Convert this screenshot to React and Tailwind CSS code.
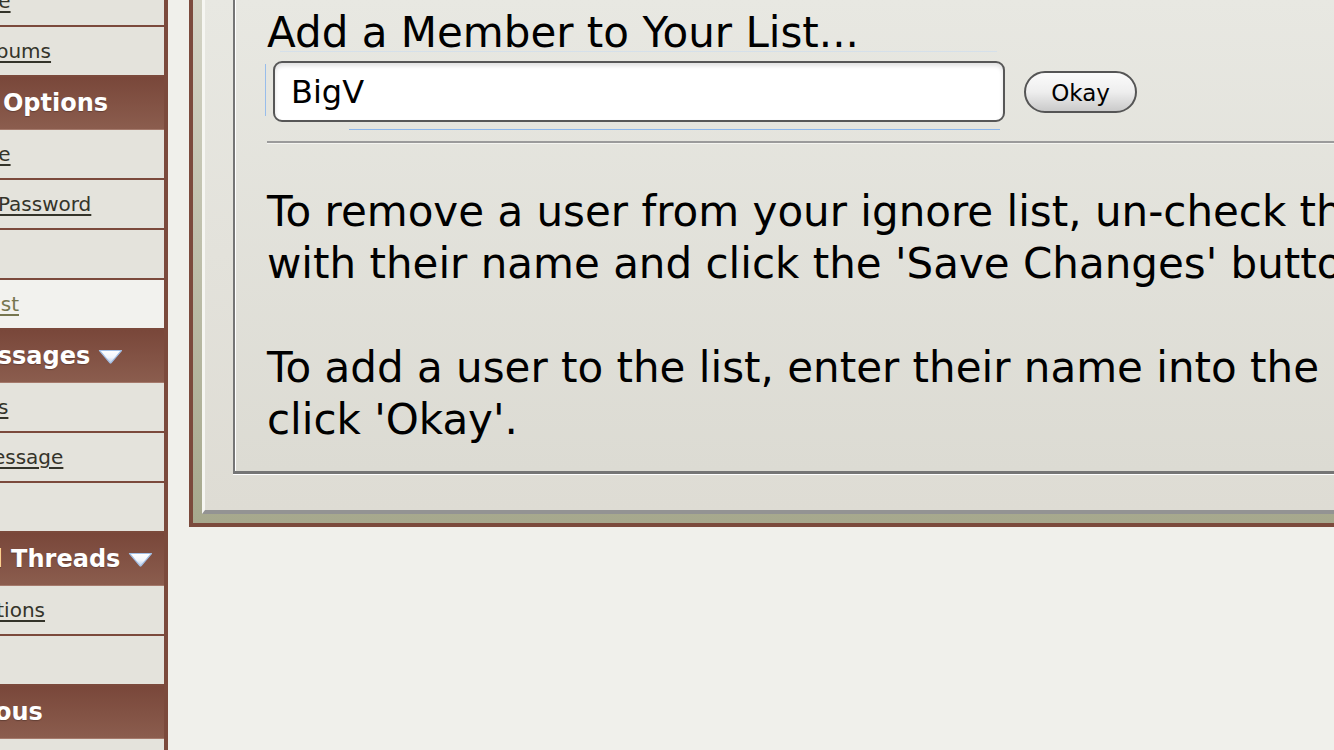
import React from 'react';

const navItems = [
  { type: 'link', label: 'Edit Signature' },
  { type: 'link', label: 'Pictures & Albums' },
  { type: 'header', label: 'Settings & Options' },
  { type: 'link', label: 'Edit Signature' },
  { type: 'link', label: 'Edit Email & Password' },
  { type: 'link', label: 'Edit Options' },
  { type: 'link', label: 'Edit Ignore List', active: true },
  { type: 'header', label: 'Private Messages', arrow: true },
  { type: 'link', label: 'List Messages' },
  { type: 'link', label: 'Send New Message' },
  { type: 'link', label: 'Edit Folders' },
  { type: 'header', label: 'Subscribed Threads', arrow: true },
  { type: 'link', label: 'List Subscriptions' },
  { type: 'link', label: 'Edit Folders' },
  { type: 'header', label: 'Miscellaneous' },
  { type: 'link', label: 'Attachments' },
];

// little blue-white drop-down arrow next to collapsible headers
const DownArrow = () => (
  <svg width="25" height="15" viewBox="0 0 25 15" className="ml-2 shrink-0">
    <defs>
      <linearGradient id="arrowFill" x1="0" y1="0" x2="0" y2="1">
        <stop offset="0" stopColor="#ffffff" />
        <stop offset="0.55" stopColor="#f2f6fc" />
        <stop offset="1" stopColor="#b3cbec" />
      </linearGradient>
    </defs>
    <path d="M1.5 1.5 H23.5 L13 13.8 Q12.5 14.3 12 13.8 Z" fill="url(#arrowFill)" stroke="#a3c0e6" strokeWidth="1.2" strokeLinejoin="round" />
  </svg>
);

const Sidebar = () => (
  <aside className="w-[168px] shrink-0 overflow-hidden border-r-4 border-[#7b4a3c] bg-[#e4e3dc]">
    <div className="-mt-[23px]">
      {navItems.map((item, i) =>
        item.type === 'header' ? (
          <div
            key={i}
            className="flex h-[53px] items-center whitespace-nowrap border-b border-[#a57a6c] bg-gradient-to-b from-[#79473a] to-[#8b5d4e] text-[24px] font-bold text-white [text-shadow:0_1px_1px_rgba(0,0,0,0.25)]"
          >
            <span className="-ml-[148px]">{item.label}</span>
            {item.arrow && <DownArrow />}
          </div>
        ) : (
          <div
            key={i}
            className={`flex h-[50px] items-center whitespace-nowrap border-b-2 border-[#7b4a3c] text-[20px] ${
              item.active ? 'bg-[#f2f2ee] text-[#76764f]' : 'bg-[#e4e3dc] text-[#34342a]'
            }`}
          >
            <span className="-ml-[131px] underline underline-offset-[3px]">{item.label}</span>
          </div>
        )
      )}
    </div>
  </aside>
);

const IgnoreListPanel = () => (
  <div className="border-b-4 border-l-4 border-[#7b4a3c]">
    {/* olive band */}
    <div className="bg-gradient-to-b from-[#d4d4c6] to-[#a6a88d] pb-[9px] pl-[9px]">
      {/* bevelled outer panel */}
      <div className="border-b-4 border-l-[3px] border-b-[#939393] border-l-[#f6f6f2] bg-gradient-to-b from-[#e8e8e2] to-[#dedcd4] pb-[36px] pl-[28px]">
        {/* inner panel */}
        <div className="border-b-[3px] border-l-2 border-[#757575] bg-gradient-to-b from-[#e8e8e2] to-[#dcdbd3] pb-[25px] pl-[32px] pt-[7px] shadow-[inset_1px_0_0_#ffffff,0_1px_0_#ffffff]">
          <div className="w-[1465px] text-[42px] leading-[52px] text-black">
            <div>Add a Member to Your List...</div>

            <div className="relative mt-[2px] flex items-center pl-[6px]">
              <span className="absolute -top-[10px] left-[13px] h-px w-[717px] bg-[#d5e0ea]" />
              <span className="absolute left-[-2px] top-[3px] h-[52px] w-px bg-[#98bdeb]" />
              <span className="absolute -bottom-[8px] left-[82px] h-px w-[651px] bg-[#8cb6ea]" />
              <input
                type="text"
                defaultValue="BigV"
                className="h-[61px] w-[732px] rounded-[9px] border-2 border-[#575757] bg-white px-[16px] text-[32px] text-black shadow-[inset_0_3px_4px_rgba(0,0,0,0.12)] outline-none"
              />
              <button
                type="button"
                className="ml-[19px] h-[42px] w-[113px] rounded-full border-2 border-[#555555] bg-gradient-to-b from-[#fbfbfb] via-[#eeeeee] to-[#cacaca] pt-[4px] text-[23px] leading-none text-black"
              >
                Okay
              </button>
            </div>

            <div className="mt-[19px] border-t-2 border-b border-t-[#9b9b9b] border-b-[#f4f4f0]" />

            <p className="mt-[42px]">
              To remove a user from your ignore list, un-check the box associated with their name and click the 'Save Changes' button.
              <br />
              <br />
              To add a user to the list, enter their name into the box above and click 'Okay'.
            </p>
          </div>
        </div>
      </div>
    </div>
  </div>
);

export default function App() {
  return (
    <div className="flex h-[750px] w-[1334px] overflow-hidden bg-[#f0f0eb] font-['DejaVu_Sans',Verdana,sans-serif]">
      <Sidebar />
      <main className="min-w-0 flex-1 pl-[21px]">
        <IgnoreListPanel />
      </main>
    </div>
  );
}
